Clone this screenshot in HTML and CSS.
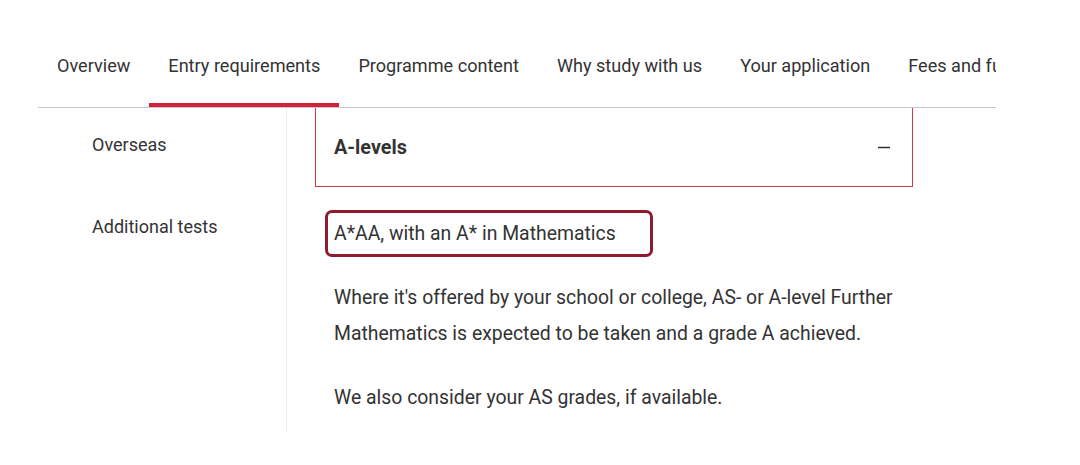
FILE: index.html
```html
<!DOCTYPE html>
<html lang="en">
<head>
    <meta charset="UTF-8">
    <meta name="viewport" content="width=device-width, initial-scale=1.0">
    <title>Entry requirements</title>
    <link rel="stylesheet" href="styles.css">
</head>
<body>
    <nav class="tabs">
        <a href="#" class="tab">Overview</a>
        <a href="#" class="tab active">Entry requirements</a>
        <a href="#" class="tab">Programme content</a>
        <a href="#" class="tab">Why study with us</a>
        <a href="#" class="tab">Your application</a>
        <a href="#" class="tab">Fees and funding</a>
    </nav>
    <div class="main">
        <aside class="sidebar">
            <a href="#" class="side-link">Overseas</a>
            <a href="#" class="side-link">Additional tests</a>
        </aside>
        <section class="content">
            <div class="accordion">
                <span class="accordion-title">A-levels</span>
                <svg class="toggle" width="12" height="12" viewBox="0 0 12 12">
                    <line x1="0" y1="6.5" x2="12" y2="6.5" stroke="#333" stroke-width="1.5"/>
                </svg>
            </div>
            <div class="grade">A*AA, with an A* in Mathematics</div>
            <p class="first">Where it's offered by your school or college, AS- or A-level Further Mathematics is expected to be taken and a grade A achieved.</p>
            <p>We also consider your AS grades, if available.</p>
        </section>
    </div>
</body>
</html>
```

FILE: styles.css
```css
body {
    margin: 0;
    padding: 0;
    font-family: Roboto, "Liberation Sans", Arial, sans-serif;
    color: #333;
    background: #fff;
}
.tabs {
    display: flex;
    margin: 30px 0 0 38px;
    width: 958px;
    overflow: hidden;
    white-space: nowrap;
    border-bottom: 1px solid #c8c8cc;
}
.tab {
    flex: none;
    padding: 24px 19px 25px;
    font-size: 18.1px;
    line-height: 24px;
    color: #333;
    text-decoration: none;
    border-bottom: 4px solid transparent;
}
.tab.active {
    border-bottom-color: #d2213a;
}
.main {
    display: flex;
    margin-left: 38px;
    height: 324px;
}
.sidebar {
    display: flex;
    flex-direction: column;
    gap: 58px;
    width: 194px;
    padding: 25px 0 0 54px;
    border-right: 1px solid #ececec;
}
.side-link {
    font-size: 18px;
    line-height: 24px;
    color: #333;
    text-decoration: none;
}
.content {
    padding-left: 28px;
}
.accordion {
    display: flex;
    align-items: center;
    justify-content: space-between;
    box-sizing: border-box;
    width: 598px;
    height: 79px;
    padding: 0 22px 0 18px;
    border: 1px solid #d93448;
    border-top: none;
}
.accordion-title {
    font-size: 19.8px;
    font-weight: bold;
    color: #333;
}
.grade {
    display: inline-flex;
    align-items: center;
    box-sizing: border-box;
    height: 47px;
    margin: 23px 0 0 10px;
    padding: 0 34px 0 6px;
    border: 3px solid #8e1b2e;
    border-radius: 7px;
    font-size: 19.4px;
}
.content p {
    margin: 28px 0 0 19px;
    width: 575px;
    font-size: 19.4px;
    line-height: 36px;
}
.content p.first {
    margin-top: 23px;
}
```
